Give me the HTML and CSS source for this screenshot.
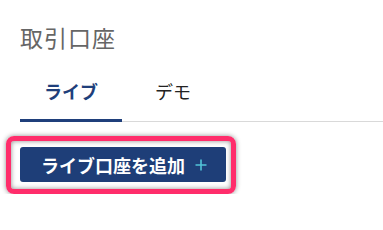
FILE: index.html
```html
<!DOCTYPE html>
<html>
    <head>
        <meta charset="utf-8">
        <link rel="stylesheet" href="styles.css">
        <title>取引口座</title>
    </head>
    <body>
        <div class="header">
            <h1 class="title">取引口座</h1>
            <div class="tabs">
                <a class="tab active" href="#">ライブ</a>
                <a class="tab" href="#">デモ</a>
            </div>
        </div>
        <div class="actions">
            <div class="highlight">
                <button class="add-button">ライブ口座を追加<svg class="plus" width="12" height="12" viewBox="0 0 12 12"><path d="M6 0.5V11.5M0.5 6H11.5" stroke="#52c3d8" stroke-width="1.6" fill="none"/></svg></button>
            </div>
        </div>
    </body>
</html>
```

FILE: styles.css
```css
body {
    margin: 0;
    background: #fff;
    font-family: "Noto Sans CJK JP", "Noto Sans", sans-serif;
}
.header {
    padding-left: 20px;
}
.title {
    margin: 25px 0 20px;
    font-size: 23px;
    line-height: 24px;
    letter-spacing: 1px;
    font-weight: normal;
    color: #666;
}
.tabs {
    display: flex;
    border-bottom: 1px solid #d9d9d9;
}
.tab {
    width: 102px;
    padding: 10px 0 16px;
    line-height: 24px;
    font-size: 18px;
    text-align: center;
    text-decoration: none;
    color: #222;
    border-bottom: 3px solid transparent;
    margin-bottom: -1px;
}
.tab.active {
    color: #1f3f7b;
    font-weight: bold;
    border-bottom-color: #1f3f7b;
}
.actions {
    padding: 14px 0 0 6px;
}
.highlight {
    display: inline-block;
    border: 5px solid #ff2d6b;
    border-radius: 8px;
    padding: 6px 5px 7px 9px;
    box-shadow: 0 0 5px rgba(0, 0, 0, 0.45), inset 0 0 5px rgba(0, 0, 0, 0.45);
}
.add-button {
    display: flex;
    align-items: center;
    width: 206px;
    height: 35px;
    padding: 0 0 0 21px;
    border: none;
    border-radius: 3px;
    background: #1e3e78;
    color: #fff;
    font-family: "Noto Sans CJK JP", sans-serif;
    font-size: 18px;
    font-weight: bold;
}
.plus {
    margin-left: 10px;
}
```
